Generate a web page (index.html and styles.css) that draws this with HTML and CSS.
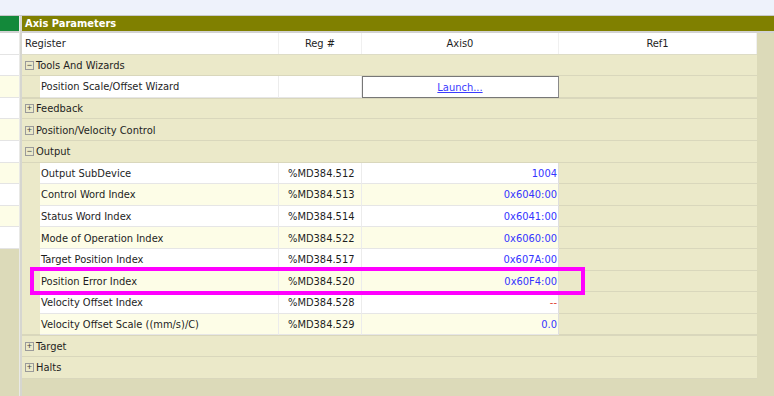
FILE: index.html
```html
<!DOCTYPE html>
<html lang="en">
<head>
  <meta charset="UTF-8" />
  <title>Axis Parameters</title>
  <link rel="stylesheet" href="styles.css">
</head>
<body>

  <div class="top-strip"></div>

  <div class="workspace">
    <div class="side-panel">
      <div class="side-title"></div>
      <div class="side-rows">
        <div class="side-row"></div>
        <div class="side-row"></div>
        <div class="side-row alt"></div>
        <div class="side-row"></div>
        <div class="side-row alt"></div>
        <div class="side-row"></div>
        <div class="side-row alt"></div>
        <div class="side-row"></div>
        <div class="side-row alt"></div>
        <div class="side-row"></div>
      </div>
    </div>

    <div class="splitter"></div>

    <div class="main-panel">
      <div class="panel-title">Axis Parameters</div>

      <div class="grid">
        <div class="row head">
          <div class="cell left">Register</div>
          <div class="cell">Reg #</div>
          <div class="cell">Axis0</div>
          <div class="cell">Ref1</div>
        </div>

        <div class="row group"><span class="toggle">&minus;</span>Tools And Wizards</div>
        <div class="row item last">
          <div class="indent"></div>
          <div class="cell name">Position Scale/Offset Wizard</div>
          <div class="cell reg"></div>
          <div class="cell value launch"><a href="#">Launch...</a></div>
          <div class="cell ref"></div>
        </div>

        <div class="row group"><span class="toggle">+</span>Feedback</div>
        <div class="row group"><span class="toggle">+</span>Position/Velocity Control</div>
        <div class="row group"><span class="toggle">&minus;</span>Output</div>

        <div class="row item">
          <div class="indent"></div>
          <div class="cell name">Output SubDevice</div>
          <div class="cell reg">%MD384.512</div>
          <div class="cell value">1004</div>
          <div class="cell ref"></div>
        </div>
        <div class="row item alt">
          <div class="indent"></div>
          <div class="cell name">Control Word Index</div>
          <div class="cell reg">%MD384.513</div>
          <div class="cell value">0x6040:00</div>
          <div class="cell ref"></div>
        </div>
        <div class="row item">
          <div class="indent"></div>
          <div class="cell name">Status Word Index</div>
          <div class="cell reg">%MD384.514</div>
          <div class="cell value">0x6041:00</div>
          <div class="cell ref"></div>
        </div>
        <div class="row item alt">
          <div class="indent"></div>
          <div class="cell name">Mode of Operation Index</div>
          <div class="cell reg">%MD384.522</div>
          <div class="cell value">0x6060:00</div>
          <div class="cell ref"></div>
        </div>
        <div class="row item">
          <div class="indent"></div>
          <div class="cell name">Target Position Index</div>
          <div class="cell reg">%MD384.517</div>
          <div class="cell value">0x607A:00</div>
          <div class="cell ref"></div>
        </div>
        <div class="row item alt">
          <div class="indent"></div>
          <div class="cell name">Position Error Index</div>
          <div class="cell reg">%MD384.520</div>
          <div class="cell value">0x60F4:00</div>
          <div class="cell ref"></div>
        </div>
        <div class="row item">
          <div class="indent"></div>
          <div class="cell name">Velocity Offset Index</div>
          <div class="cell reg">%MD384.528</div>
          <div class="cell value empty">--</div>
          <div class="cell ref"></div>
        </div>
        <div class="row item alt last">
          <div class="indent"></div>
          <div class="cell name">Velocity Offset Scale ((mm/s)/C)</div>
          <div class="cell reg">%MD384.529</div>
          <div class="cell value">0.0</div>
          <div class="cell ref"></div>
        </div>

        <div class="row group"><span class="toggle">+</span>Target</div>
        <div class="row group"><span class="toggle">+</span>Halts</div>

        <div class="highlight"></div>
      </div>
    </div>
  </div>

</body>
</html>
```

FILE: styles.css
```css
body {
  margin: 0;
  font-family: "DejaVu Sans Condensed", "Liberation Sans", sans-serif;
  font-size: 11px;
  color: #1e1e1e;
  background: #dcdab9;
  height: 396px;
  overflow: hidden;
}

.top-strip {
  height: 15px;
  background: #eef2fb;
  border-bottom: 1px solid #c8c8c8;
}

.workspace {
  display: flex;
  height: 380px;
}

.side-panel {
  width: 19px;
  background: #dcdab9;
}

.side-title {
  height: 15px;
  background: #13893a;
  border-bottom: 2px solid #d2d2d2;
}

.side-row {
  height: 21.6px;
  box-sizing: border-box;
  background: #fff;
  border-bottom: 1px solid #e4e4e4;
}

.side-row.alt {
  background: #fdfde7;
}

.splitter {
  width: 3px;
  background: #d6d6d0;
  border-left: 1px solid #e9e9e6;
  box-sizing: border-box;
}

.main-panel {
  flex: 1;
  background: #dcdab9;
}

.panel-title {
  height: 15px;
  line-height: 15px;
  background: #808000;
  color: #fff;
  font-weight: bold;
  padding-left: 3px;
  border-bottom: 2px solid #d2d2d2;
}

.grid {
  position: relative;
  width: 735px;
}

.row {
  height: 21.6px;
  box-sizing: border-box;
  display: grid;
  grid-template-columns: 257px 83px 197px 198px;
  align-items: stretch;
}

.cell {
  display: flex;
  align-items: center;
  box-sizing: border-box;
  padding-top: 1px;
}

.head {
  background: #fff;
  border-bottom: 1px solid #dddcc6;
}

.head .cell {
  justify-content: center;
  border-right: 1px solid #f0f0f0;
}

.head .cell.left {
  justify-content: flex-start;
  padding-left: 3px;
}

.group {
  display: flex;
  align-items: center;
  background: #ebe9c9;
  border-bottom: 1px solid #d9d7bc;
  padding-left: 3px;
  padding-top: 1px;
}

.item + .group {
  box-shadow: inset 0 1px #d9d7bc;
}

.toggle {
  width: 9px;
  height: 9px;
  box-sizing: border-box;
  border: 1px solid #9a9a9a;
  font-size: 9px;
  line-height: 6px;
  text-align: center;
  color: #444;
  margin-right: 2px;
  font-family: "Liberation Sans", sans-serif;
}

.item {
  grid-template-columns: 18px 239px 83px 197px 198px;
  background: #ebe9c9;
}

.item .cell {
  background: #fff;
  border-bottom: 1px solid #e6e6e6;
}

.item.alt .cell {
  background: #fdfde7;
}

.item .name {
  padding-left: 1px;
  border-right: 1px solid #ececec;
}

.item .reg {
  padding-left: 9px;
  border-right: 1px solid #ececec;
}

.item .value {
  justify-content: flex-end;
  padding-right: 1px;
  color: #3434ff;
  border-right: 1px solid #dedede;
}

.item .value.empty {
  color: #e0442c;
}

.item .cell.ref,
.item.alt .cell.ref {
  background: #ebe9c9;
  border-bottom: 1px solid #d9d7bc;
}

.item.last .indent {
  border-bottom: 1px solid #d9d7bc;
}

.item .launch {
  justify-content: center;
  border: 1px solid #777;
  border-right-color: #8a8a8a;
}

.launch a {
  color: #3a3aff;
}

.highlight {
  position: absolute;
  left: 8px;
  top: 234px;
  width: 555px;
  height: 28px;
  box-sizing: border-box;
  border: 4px solid #ff00ff;
}
```
